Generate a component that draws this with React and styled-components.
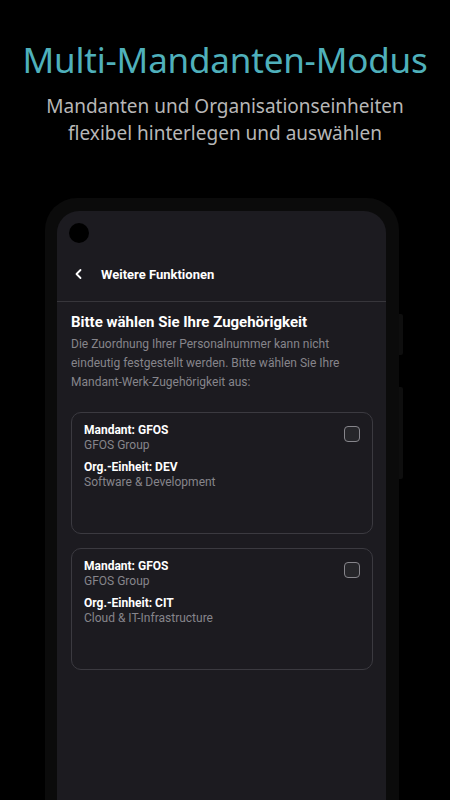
import React from 'react'
import styled, { createGlobalStyle } from 'styled-components'

const GlobalStyle = createGlobalStyle`
  html, body {
    margin: 0;
    padding: 0;
    background: #000;
  }
  body {
    width: 450px;
    height: 800px;
    overflow: hidden;
    font-family: Roboto, 'Liberation Sans', sans-serif;
  }
`

const Page = styled.div`
  width: 450px;
  height: 800px;
  background: #000;
  display: flex;
  flex-direction: column;
  align-items: center;
  overflow: hidden;
`

const Title = styled.h1`
  margin: 36px 0 0;
  font-family: 'Noto Sans', sans-serif;
  font-weight: 400;
  font-size: 35px;
  line-height: 48px;
  color: #4fb0bb;
  letter-spacing: -0.2px;
`

const Subtitle = styled.p`
  margin: 9px 0 0;
  font-family: 'Noto Sans', sans-serif;
  font-size: 19px;
  line-height: 27px;
  color: #b7b7b7;
  text-align: center;
`

const PhoneWrap = styled.div`
  position: relative;
  margin: 51px 6px 0 0;
  width: 354px;
  flex: 1;
`

const Phone = styled.div`
  height: 100%;
  background: #0b0b0b;
  border-radius: 32px 32px 0 0;
  padding: 13px 13px 0 12px;
  box-sizing: border-box;
`

const SideButton = styled.div`
  position: absolute;
  right: -4px;
  top: ${(p) => p.top}px;
  width: 4px;
  height: ${(p) => p.h}px;
  background: #0e0e0e;
  border-radius: 0 2px 2px 0;
`

const Screen = styled.div`
  height: 100%;
  background: #1c1b20;
  border-radius: 22px 22px 0 0;
  display: flex;
  flex-direction: column;
`

const StatusBar = styled.div`
  height: 36px;
  padding: 12px 0 0 12px;
  box-sizing: border-box;
`

const Camera = styled.div`
  width: 20px;
  height: 20px;
  border-radius: 50%;
  background: #000;
`

const Header = styled.div`
  height: 54px;
  display: flex;
  align-items: center;
  gap: 16px;
  padding: 0 0 0 16px;
  border-bottom: 1px solid #37363b;
  color: #fff;
  font-size: 13px;
  font-weight: 700;
`

const Content = styled.div`
  padding: 10px 13px 0 14px;
  display: flex;
  flex-direction: column;
`

const Heading = styled.h2`
  margin: 0;
  font-size: 15px;
  line-height: 20px;
  font-weight: 700;
  color: #fff;
`

const Text = styled.p`
  margin: 3px 0 0;
  font-size: 12px;
  line-height: 19px;
  color: #86858b;
`

const Cards = styled.div`
  margin-top: 20px;
  display: flex;
  flex-direction: column;
  gap: 14px;
`

const Card = styled.div`
  height: 122px;
  box-sizing: border-box;
  border: 1px solid #3b3a40;
  border-radius: 10px;
  padding: 10px 12px 0 12px;
  display: flex;
  justify-content: space-between;
  align-items: flex-start;
`

const Info = styled.div`
  display: flex;
  flex-direction: column;
`

const Label = styled.div`
  font-size: 12px;
  line-height: 15px;
  font-weight: 700;
  color: #fff;
  margin-top: ${(p) => (p.gap ? '7px' : '0')};
`

const Value = styled.div`
  font-size: 12px;
  line-height: 15px;
  color: #86858b;
`

const Checkbox = styled.div`
  width: 14px;
  height: 14px;
  margin-top: 3px;
  border: 1.5px solid #86858b;
  border-radius: 4px;
  background: #26262a;
`

const Chevron = () => (
  <svg width='12' height='12' viewBox='0 0 12 12'>
    <path
      d='M7.5 2 L3.5 6 L7.5 10'
      fill='none'
      stroke='#fff'
      strokeWidth='1.8'
      strokeLinecap='round'
      strokeLinejoin='round'
    />
  </svg>
)

const entries = [
  { mandant: 'GFOS', group: 'GFOS Group', org: 'DEV', orgName: 'Software & Development' },
  { mandant: 'GFOS', group: 'GFOS Group', org: 'CIT', orgName: 'Cloud & IT-Infrastructure' },
]

const App = () => (
  <>
    <GlobalStyle />
    <Page>
      <Title>Multi-Mandanten-Modus</Title>
      <Subtitle>
        Mandanten und Organisationseinheiten
        <br />
        flexibel hinterlegen und auswählen
      </Subtitle>
      <PhoneWrap>
        <SideButton top={116} h={41} />
        <SideButton top={189} h={92} />
        <Phone>
          <Screen>
            <StatusBar>
              <Camera />
            </StatusBar>
            <Header>
              <Chevron />
              Weitere Funktionen
            </Header>
            <Content>
              <Heading>Bitte wählen Sie Ihre Zugehörigkeit</Heading>
              <Text>
                Die Zuordnung Ihrer Personalnummer kann nicht eindeutig festgestellt werden. Bitte
                wählen Sie Ihre Mandant-Werk-Zugehörigkeit aus:
              </Text>
              <Cards>
                {entries.map((e) => (
                  <Card key={e.org}>
                    <Info>
                      <Label>Mandant: {e.mandant}</Label>
                      <Value>{e.group}</Value>
                      <Label gap>Org.-Einheit: {e.org}</Label>
                      <Value>{e.orgName}</Value>
                    </Info>
                    <Checkbox />
                  </Card>
                ))}
              </Cards>
            </Content>
          </Screen>
        </Phone>
      </PhoneWrap>
    </Page>
  </>
)

export default App
